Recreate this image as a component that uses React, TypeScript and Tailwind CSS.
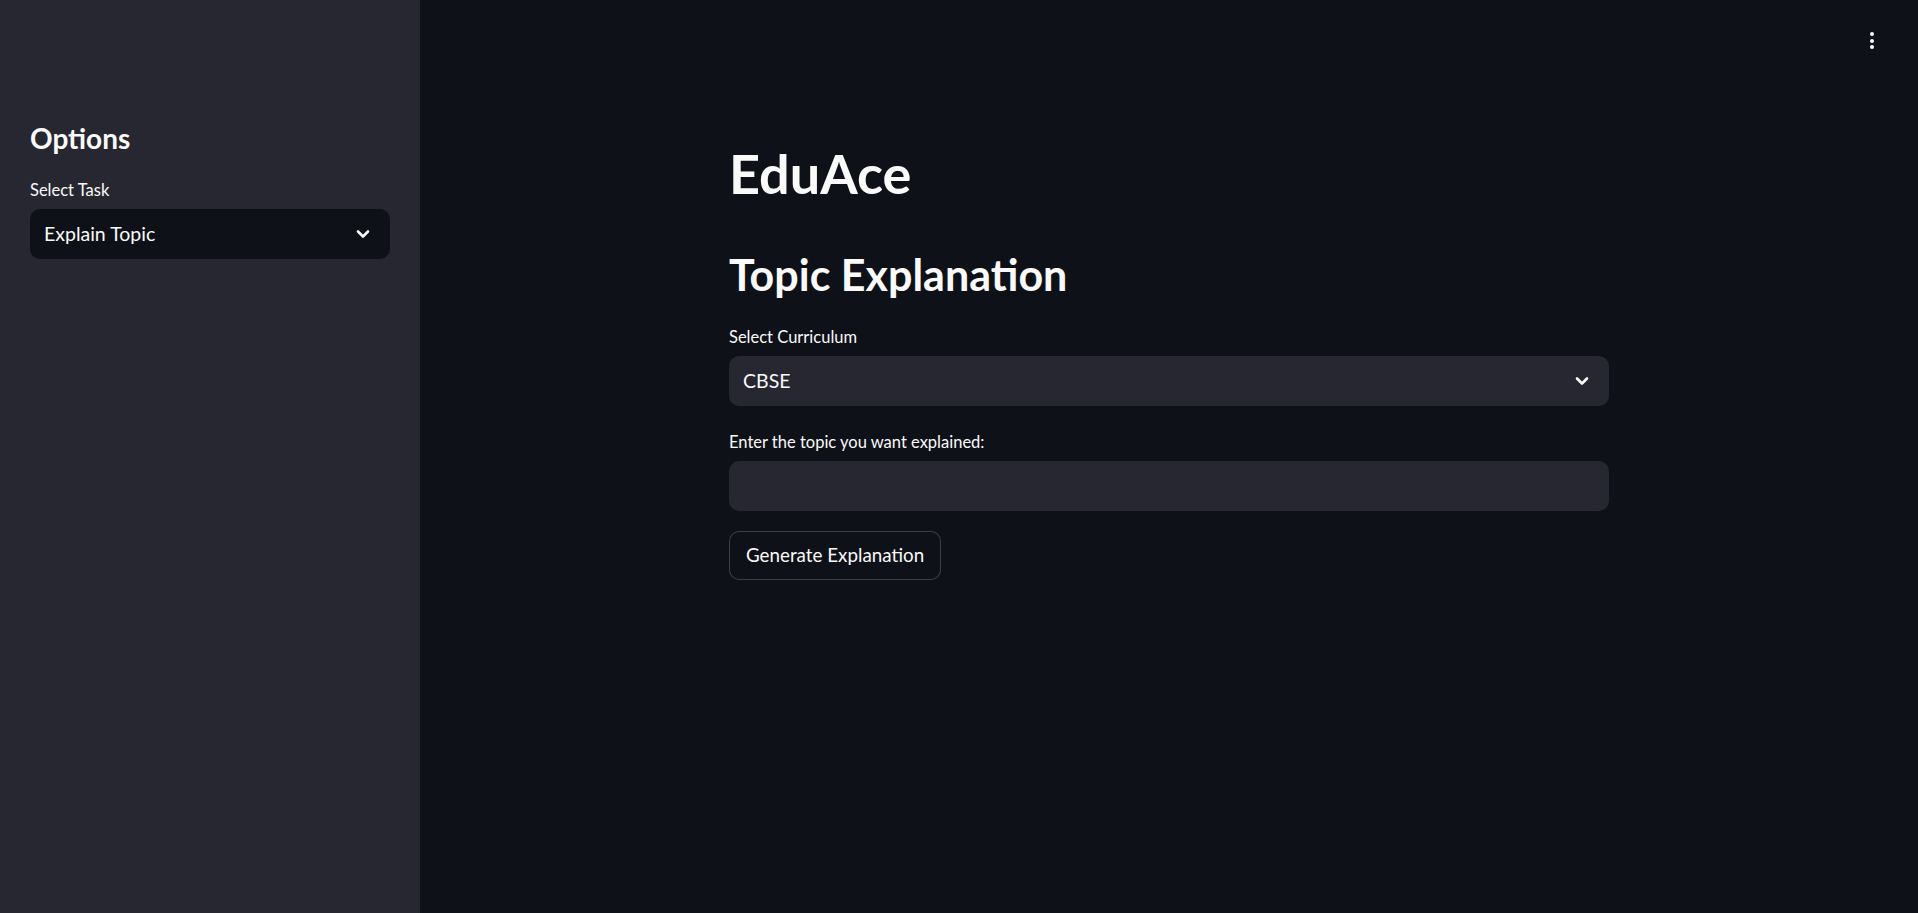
const font = { fontFamily: '"Lato", "Liberation Sans", sans-serif' }

function Chevron() {
  return (
    <svg width="14" height="10" viewBox="0 0 14 10" fill="none">
      <path d="M2 2.5 L7 7.5 L12 2.5" stroke="#fafafa" strokeWidth="2.6" strokeLinecap="round" strokeLinejoin="round" />
    </svg>
  )
}

function Select({ value, dark }: { value: string; dark?: boolean }) {
  return (
    <div
      className={`flex h-[50px] items-center justify-between rounded-[10px] pl-[14px] pr-[20px] ${dark ? 'bg-[#0e1117]' : 'bg-[#262730]'}`}
    >
      <span className="text-[19.5px] text-[#fafafa]">{value}</span>
      <Chevron />
    </div>
  )
}

export default function App() {
  return (
    <div className="flex h-[913px] w-full overflow-hidden bg-[#0e1117] text-[#fafafa]" style={font}>
      <aside className="flex w-[420px] shrink-0 flex-col bg-[#262730] px-[30px] pt-[120px]">
        <h2 className="text-[28px] font-bold leading-[36px]">Options</h2>
        <label className="mt-[23px] text-[16.5px] leading-[22px]">Select Task</label>
        <div className="mt-[8px]">
          <Select value="Explain Topic" dark />
        </div>
      </aside>

      <main className="relative flex flex-1 justify-center">
        <button className="absolute right-[44px] top-[32px] flex flex-col gap-[2.5px]" aria-label="menu">
          <span className="h-[4px] w-[4px] rounded-full bg-[#fafafa]" />
          <span className="h-[4px] w-[4px] rounded-full bg-[#fafafa]" />
          <span className="h-[4px] w-[4px] rounded-full bg-[#fafafa]" />
        </button>

        <div className="flex w-[880px] flex-col pt-[141px]">
          <h1 className="text-[54px] font-bold leading-[66px]">EduAce</h1>
          <h2 className="mt-[41px] text-[43px] font-bold leading-[54px]">Topic Explanation</h2>

          <label className="mt-[24px] text-[16.5px] leading-[22px]">Select Curriculum</label>
          <div className="mt-[8px]">
            <Select value="CBSE" />
          </div>

          <label className="mt-[25px] text-[16.5px] leading-[22px]">Enter the topic you want explained:</label>
          <div className="mt-[8px] h-[50px] rounded-[10px] bg-[#262730]" />

          <div className="mt-[20px]">
            <button className="h-[49px] rounded-[10px] border border-[rgba(250,250,250,0.2)] bg-[#0e1117] px-[16px] text-[18.8px] text-[#fafafa]">
              Generate Explanation
            </button>
          </div>
        </div>
      </main>
    </div>
  )
}
